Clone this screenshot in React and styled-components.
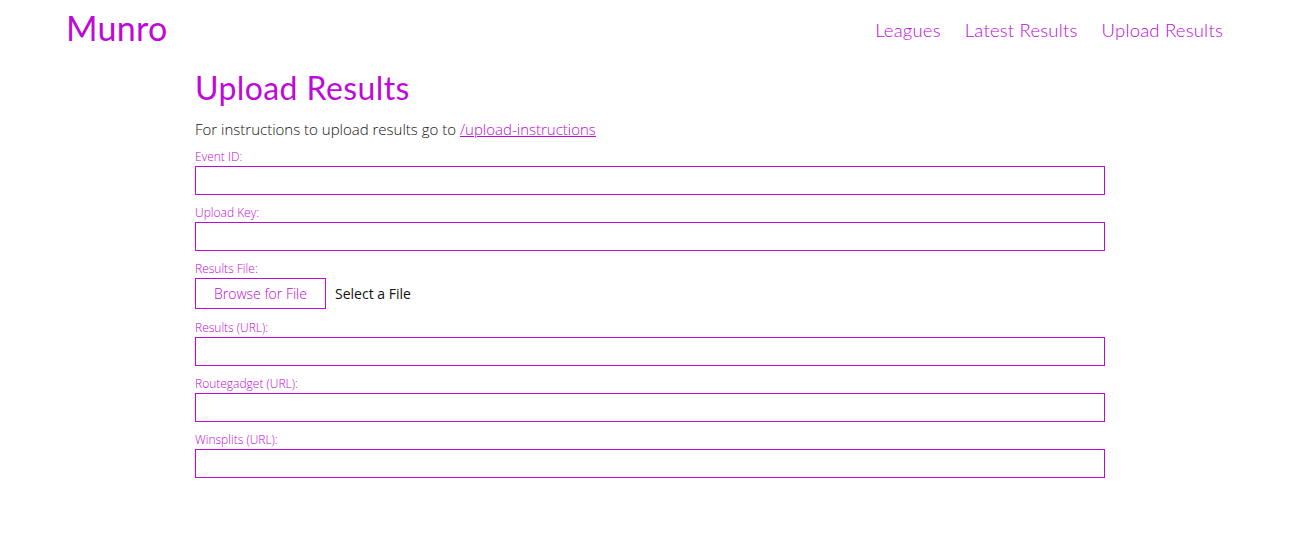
import React from "react";
import styled, { createGlobalStyle } from "styled-components";

const PURPLE = "#bd0ad8";

const Global = createGlobalStyle`
  html, body { margin: 0; padding: 0; background: #fff; }
  body { font-family: "Open Sans", "Noto Sans", sans-serif; color: #111; }
  * { box-sizing: border-box; }
`;

const Header = styled.header`
  display: flex;
  align-items: center;
  justify-content: space-between;
  padding: 8px 77px 0 66px;
  height: 56px;
`;

const Logo = styled.div`
  font-family: "Lato", sans-serif;
  font-size: 34px;
  font-weight: 400;
  color: ${PURPLE};
  letter-spacing: 0.3px;
  line-height: 40px;
  margin-top: -8px;
`;

const Nav = styled.nav`
  display: flex;
  gap: 24px;
  margin-top: -4px;
`;

const NavLink = styled.a`
  font-family: "Lato", sans-serif;
  font-weight: 300;
  font-size: 18.5px;
  color: ${PURPLE};
  text-decoration: none;
  letter-spacing: 0.2px;
`;

const Main = styled.main`
  width: 910px;
  margin: 0 0 0 195px;
  display: flex;
  flex-direction: column;
`;

const Title = styled.h1`
  font-family: "Lato", sans-serif;
  font-weight: 400;
  font-size: 32px;
  line-height: 40px;
  color: ${PURPLE};
  margin: 12px 0 0 0;
  letter-spacing: 0.4px;
`;

const Intro = styled.p`
  font-size: 15px;
  font-weight: 300;
  line-height: 20px;
  margin: 11px 0 0 0;
  color: #111;
`;

const Link = styled.a`
  color: ${PURPLE};
  text-decoration: underline;
`;

const Label = styled.label`
  display: block;
  font-size: 12px;
  font-weight: 300;
  color: ${PURPLE};
  line-height: 15px;
  margin: ${(p) => (p.$first ? "0" : "10px")} 0 2px 0;
`;

const Input = styled.input`
  display: block;
  width: 910px;
  height: 29px;
  border: 1px solid ${PURPLE};
  border-radius: 0;
  outline: none;
  padding: 0 6px;
  font-size: 14px;
`;

const FileRow = styled.div`
  display: flex;
  align-items: center;
  gap: 9px;
  margin-bottom: 1px;
`;

const BrowseButton = styled.button`
  height: 31px;
  width: 131px;
  border: 1px solid ${PURPLE};
  background: #fff;
  color: ${PURPLE};
  font-family: "Open Sans", sans-serif;
  font-size: 14px;
  font-weight: 300;
  padding: 0;
  cursor: pointer;
`;

const FileText = styled.span`
  font-size: 14px;
  font-weight: 400;
  color: #111;
`;

const Form = styled.form`
  display: flex;
  flex-direction: column;
  margin-top: 10px;
`;

export default function App() {
  return (
    <>
      <Global />
      <Header>
        <Logo>Munro</Logo>
        <Nav>
          <NavLink href="#">Leagues</NavLink>
          <NavLink href="#">Latest Results</NavLink>
          <NavLink href="#">Upload Results</NavLink>
        </Nav>
      </Header>
      <Main>
        <Title>Upload Results</Title>
        <Intro>
          For instructions to upload results go to <Link href="#">/upload-instructions</Link>
        </Intro>
        <Form>
          <Label $first>Event ID:</Label>
          <Input type="text" />
          <Label>Upload Key:</Label>
          <Input type="text" />
          <Label>Results File:</Label>
          <FileRow>
            <BrowseButton type="button">Browse for File</BrowseButton>
            <FileText>Select a File</FileText>
          </FileRow>
          <Label>Results (URL):</Label>
          <Input type="text" />
          <Label>Routegadget (URL):</Label>
          <Input type="text" />
          <Label>Winsplits (URL):</Label>
          <Input type="text" />
        </Form>
      </Main>
    </>
  );
}
